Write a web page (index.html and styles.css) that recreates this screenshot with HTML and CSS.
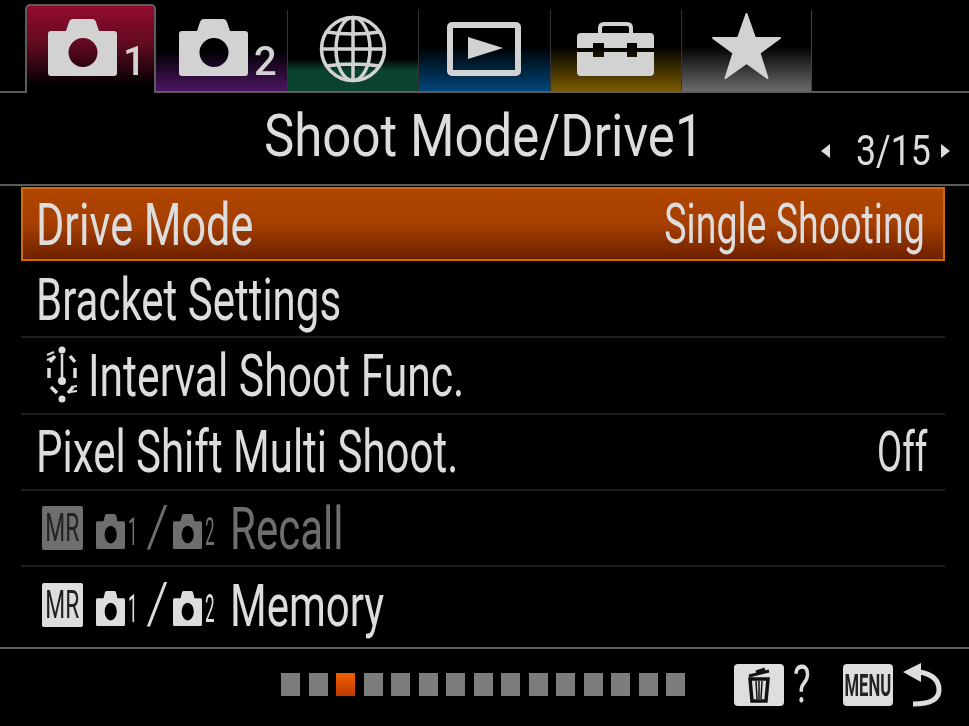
FILE: index.html
```html
<!DOCTYPE html>
<html lang="en">
<head>
  <meta charset="UTF-8" />
  <title>Shoot Mode/Drive1</title>
  <link rel="stylesheet" href="styles.css">
</head>
<body>
  <svg class="defs" width="0" height="0">
    <symbol id="camera" viewBox="0 0 69 57" preserveAspectRatio="none">
      <path fill-rule="evenodd" d="M3 12H18L21 3Q22 0 25 0H44Q47 0 48 3L51 12H66Q69 12 69 15V54Q69 57 66 57H3Q0 57 0 54V15Q0 12 3 12ZM35 19A14.500 14.500 0 1 0 35 48A14.500 14.500 0 1 0 35 19Z"/>
    </symbol>
  </svg>

  <div class="screen">
    <div class="tabs">
      <div class="tab tab-cam1 active">
        <svg class="cam-icon"><use href="#camera"/></svg><span class="tab-num">1</span>
      </div>
      <div class="tab tab-cam2">
        <svg class="cam-icon"><use href="#camera"/></svg><span class="tab-num">2</span>
      </div>
      <div class="tab tab-net">
        <svg width="68" height="68" viewBox="0 0 68 68" fill="none" stroke="#d2d2d2" stroke-width="3.500">
          <circle cx="34" cy="34" r="31.500"/>
          <ellipse cx="34" cy="34" rx="17" ry="31.500"/>
          <path d="M34 2.500V65.500M2.500 34H65.500M7.500 17Q34 21 60.500 17M7.500 51Q34 47 60.500 51"/>
        </svg>
      </div>
      <div class="tab tab-play">
        <svg width="74" height="54" viewBox="0 0 74 54">
          <rect x="3" y="3" width="68" height="48" rx="2" fill="none" stroke="#d2d2d2" stroke-width="6"/>
          <path d="M21 15L56 26L21 37Z" fill="#d2d2d2"/>
        </svg>
      </div>
      <div class="tab tab-tool">
        <svg width="77" height="54" viewBox="0 0 77 54" fill="#d2d2d2">
          <path d="M23 11V6Q23 2 27 2H50Q54 2 54 6V11" fill="none" stroke="#d2d2d2" stroke-width="4"/>
          <path d="M4 11H73Q77 11 77 15V26H60V21H50V26H27V21H16V26H0V15Q0 11 4 11Z"/>
          <path d="M0 30H16V35H27V30H50V35H60V30H77V50Q77 54 73 54H4Q0 54 0 50Z"/>
        </svg>
      </div>
      <div class="tab tab-star">
        <svg width="69" height="66" viewBox="0 0 69 66">
          <path d="M34.500 1L43 25H68L47.500 40L55.500 65L34.500 50L13.500 65L21.500 40L1 25H26Z" fill="#d2d2d2" stroke="#d2d2d2" stroke-width="2" stroke-linejoin="round"/>
        </svg>
      </div>
    </div>

    <div class="title-bar">
      <h1 class="title"><span class="sq sq-title">Shoot Mode/Drive1</span></h1>
      <div class="pager">
        <span class="arrow arrow-left"></span>
        <span class="pager-text"><span class="sq-pager">3/15</span></span>
        <span class="arrow arrow-right"></span>
      </div>
    </div>

    <div class="list">
      <div class="row selected"><span class="sq">Drive Mode</span><span class="sq sq-value">Single Shooting</span></div>
      <div class="row"><span class="sq">Bracket Settings</span></div>
      <div class="row">
        <svg class="interval-icon" width="32" height="58" viewBox="0 0 32 58" fill="none" stroke="#ddd" stroke-width="3.500">
          <circle cx="16" cy="4" r="3.500" fill="#ddd" stroke="none"/>
          <circle cx="16" cy="53" r="3.500" fill="#ddd" stroke="none"/>
          <circle cx="16" cy="35" r="4" fill="#ddd" stroke="none"/>
          <path d="M16 8V33" stroke-width="2.500"/>
          <path d="M3 22V32M29 22V32M5 41L11 47M27 41L22 47M24 10L29 16M9 10L4 16"/>
          <path d="M1 9L8 6M1 14L8 11M24 46L31 45M25 41L31 40" stroke-width="2"/>
        </svg>
        <span class="sq sq-interval">Interval Shoot Func.</span>
      </div>
      <div class="row"><span class="sq">Pixel Shift Multi Shoot.</span><span class="sq sq-value">Off</span></div>
      <div class="row dimmed">
        <span class="mr"><span class="sq-mr">MR</span></span>
        <svg class="mini-cam"><use href="#camera"/></svg><span class="mini-num">1</span>
        <span class="slash">/</span>
        <svg class="mini-cam"><use href="#camera"/></svg><span class="mini-num">2</span>
        <span class="sq mem-label">Recall</span>
      </div>
      <div class="row last">
        <span class="mr"><span class="sq-mr">MR</span></span>
        <svg class="mini-cam"><use href="#camera"/></svg><span class="mini-num">1</span>
        <span class="slash">/</span>
        <svg class="mini-cam"><use href="#camera"/></svg><span class="mini-num">2</span>
        <span class="sq mem-label">Memory</span>
      </div>
    </div>

    <div class="footer">
      <div class="dots">
        <i></i><i></i><i class="on"></i><i></i><i></i><i></i><i></i><i></i><i></i><i></i><i></i><i></i><i></i><i></i><i></i>
      </div>
      <div class="key trash-key">
        <svg width="24" height="36" viewBox="0 0 24 36" fill="none" stroke="#111">
          <path d="M2 9L22 4" stroke-width="3"/>
          <path d="M9 5L18 2" stroke-width="3"/>
          <path d="M3 12H21L19 34H5Z" stroke-width="3.500"/>
          <path d="M9 14L10 32M12 14V32M15 14L14 32" stroke-width="1.500"/>
        </svg>
      </div>
      <span class="help">?</span>
      <div class="key menu-key"><span class="sq-menu">MENU</span></div>
      <svg class="back" width="40" height="46" viewBox="0 0 40 46" fill="none">
        <path d="M16 10Q36 13 36 28Q36 42 10 42" stroke="#ddd" stroke-width="5"/>
        <path d="M18 1V20L0 10Z" fill="#ddd"/>
      </svg>
    </div>
  </div>
</body>
</html>
```

FILE: styles.css
```css
* {
  box-sizing: border-box;
}
html, body {
  margin: 0;
  background: #000;
}
.defs {
  position: absolute;
}
.screen {
  width: 969px;
  height: 726px;
  background: #000;
  color: #ddd;
  font-family: Roboto, "Liberation Sans", sans-serif;
  overflow: hidden;
  filter: blur(0.7px);
}

/* The camera's font is condensed, none is installed, so squeeze Roboto */
.sq {
  display: inline-block;
  transform: scaleX(0.7);
  transform-origin: left center;
  white-space: nowrap;
}
.sq-title {
  transform: scaleX(0.85);
}
.sq-interval {
  transform: scaleX(0.71);
}
.sq-value {
  font-size: 56px;
  transform: scaleX(0.65);
  transform-origin: right center;
}

/* Tabs */
.tabs {
  height: 93px;
  padding-left: 25px;
  display: flex;
  align-items: flex-end;
  border-bottom: 2px solid #5c5c5c;
}
.tab {
  width: 131.200px;
  height: 81px;
  display: flex;
  justify-content: center;
  align-items: flex-start;
  padding-top: 9px;
  border-left: 1px solid #333;
  fill: #d2d2d2;
}
.tab.active {
  width: 131px;
  height: 89px;
  margin-bottom: -2px;
  padding: 13px 0 0 21px;
  justify-content: flex-start;
  border: 2px solid #5c5c5c;
  border-bottom: none;
  border-radius: 5px 5px 0 0;
  background: linear-gradient(to bottom, #930b2d 0%, #5e0a20 45%, #000 92%);
}
.tab-cam2 {
  justify-content: flex-start;
  padding-left: 23px;
  border-left: none;
  background: linear-gradient(to bottom, #000 50%, #4d1463 100%);
}
.tab-net {
  padding-top: 5px;
  background: linear-gradient(to bottom, #000 60%, #0a4430 75%, #0a4430 100%);
}
.tab-play {
  padding-top: 12px;
  background: linear-gradient(to bottom, #000 45%, #00467a 100%);
}
.tab-tool {
  padding-top: 12px;
  background: linear-gradient(to bottom, #000 45%, #7a5a00 100%);
}
.tab-star {
  padding-top: 3px;
  border-right: 1px solid #444;
  background: linear-gradient(to bottom, #000 45%, #6b6b6b 100%);
}
.cam-icon {
  width: 69px;
  height: 57px;
}
.tab-num {
  margin-top: 24px;
  padding-left: 6px;
  font-size: 40px;
  line-height: 38px;
  font-weight: 500;
  color: #d2d2d2;
}

/* Title bar */
.title-bar {
  height: 93px;
  padding: 0 19px 0 264px;
  display: flex;
  align-items: center;
  border-bottom: 2px solid #5c5c5c;
}
.title {
  flex: none;
  width: 434px;
  margin: -6px 0 0;
  font-size: 60px;
  font-weight: normal;
}
.pager {
  margin: 24px 0 0 auto;
  display: flex;
  align-items: center;
}
.pager-text {
  width: 73px;
  margin: 0 12px 0 26px;
  font-size: 42px;
  white-space: nowrap;
}
.sq-pager {
  display: inline-block;
  transform: scaleX(0.85);
  transform-origin: left center;
}
.arrow {
  width: 0;
  height: 0;
  border-top: 7px solid transparent;
  border-bottom: 7px solid transparent;
}
.arrow-left {
  border-right: 9px solid #ddd;
}
.arrow-right {
  border-left: 9px solid #ddd;
}

/* List */
.list {
  height: 463px;
  padding: 1px 24px 0 21px;
  border-bottom: 2px solid #5c5c5c;
}
.row {
  height: 76.300px;
  padding: 0 18px 0 15px;
  display: flex;
  justify-content: space-between;
  align-items: center;
  font-size: 60px;
  border-bottom: 2px solid #1e1e1e;
  white-space: nowrap;
}
.row:has(.interval-icon), .row:has(.mr) {
  justify-content: flex-start;
}
.row.last {
  border-bottom: none;
}
.row.selected {
  height: 74px;
  margin-bottom: 1px;
  padding-left: 13px;
  border: 2px solid #cf6c00;
  background: linear-gradient(to bottom, #b04500, #a53f00 50%, #6e2000);
}
.selected .sq:first-child {
  transform: scaleX(0.72);
}
.selected .sq-value {
  transform: scaleX(0.67);
}
.interval-icon {
  flex: none;
  margin: 0 10px 0 10px;
}
.dimmed {
  color: #6e6e6e;
}
.mr {
  flex: none;
  width: 41px;
  height: 44px;
  margin: 0 13px 0 6px;
  background: #ddd;
  border-radius: 2px;
  color: #222;
  font-size: 38px;
  line-height: 44px;
  text-align: center;
  overflow: hidden;
}
.dimmed .mr {
  background: #6e6e6e;
}
.sq-mr {
  display: inline-block;
  transform: scaleX(0.6);
  margin: 0 -20px;
}
.mini-cam {
  flex: none;
  width: 29px;
  height: 35px;
  fill: currentColor;
  margin-top: 6px;
}
.mini-num {
  flex: none;
  width: 11px;
  margin: 8px 0 0 3px;
  font-size: 38px;
  transform: scaleX(0.45);
  transform-origin: left center;
}
.slash {
  flex: none;
  width: 18px;
  margin: -4px 9px 0 7px;
  font-size: 58px;
  font-weight: 300;
}
.mem-label {
  margin-left: 14px;
}

/* Footer */
.footer {
  height: 76px;
  padding: 0 0 5px 281px;
  display: flex;
  align-items: center;
}
.dots {
  display: flex;
  gap: 8.500px;
  margin-right: 49px;
}
.dots i {
  width: 19px;
  height: 23px;
  background: #7c7c7c;
}
.dots i.on {
  background: linear-gradient(to bottom, #f06000, #c03800);
}
.key {
  flex: none;
  width: 50px;
  height: 42px;
  background: #dedede;
  border-radius: 4px;
  display: flex;
  justify-content: center;
  align-items: center;
}
.help {
  width: 59px;
  padding-left: 9px;
  font-size: 52px;
  transform: scaleX(0.72);
  transform-origin: 9px center;
}
.menu-key {
  color: #222;
  font-size: 32px;
  font-weight: bold;
  overflow: hidden;
}
.sq-menu {
  display: inline-block;
  transform: scaleX(0.52);
}
.back {
  margin-left: 10px;
}
```
